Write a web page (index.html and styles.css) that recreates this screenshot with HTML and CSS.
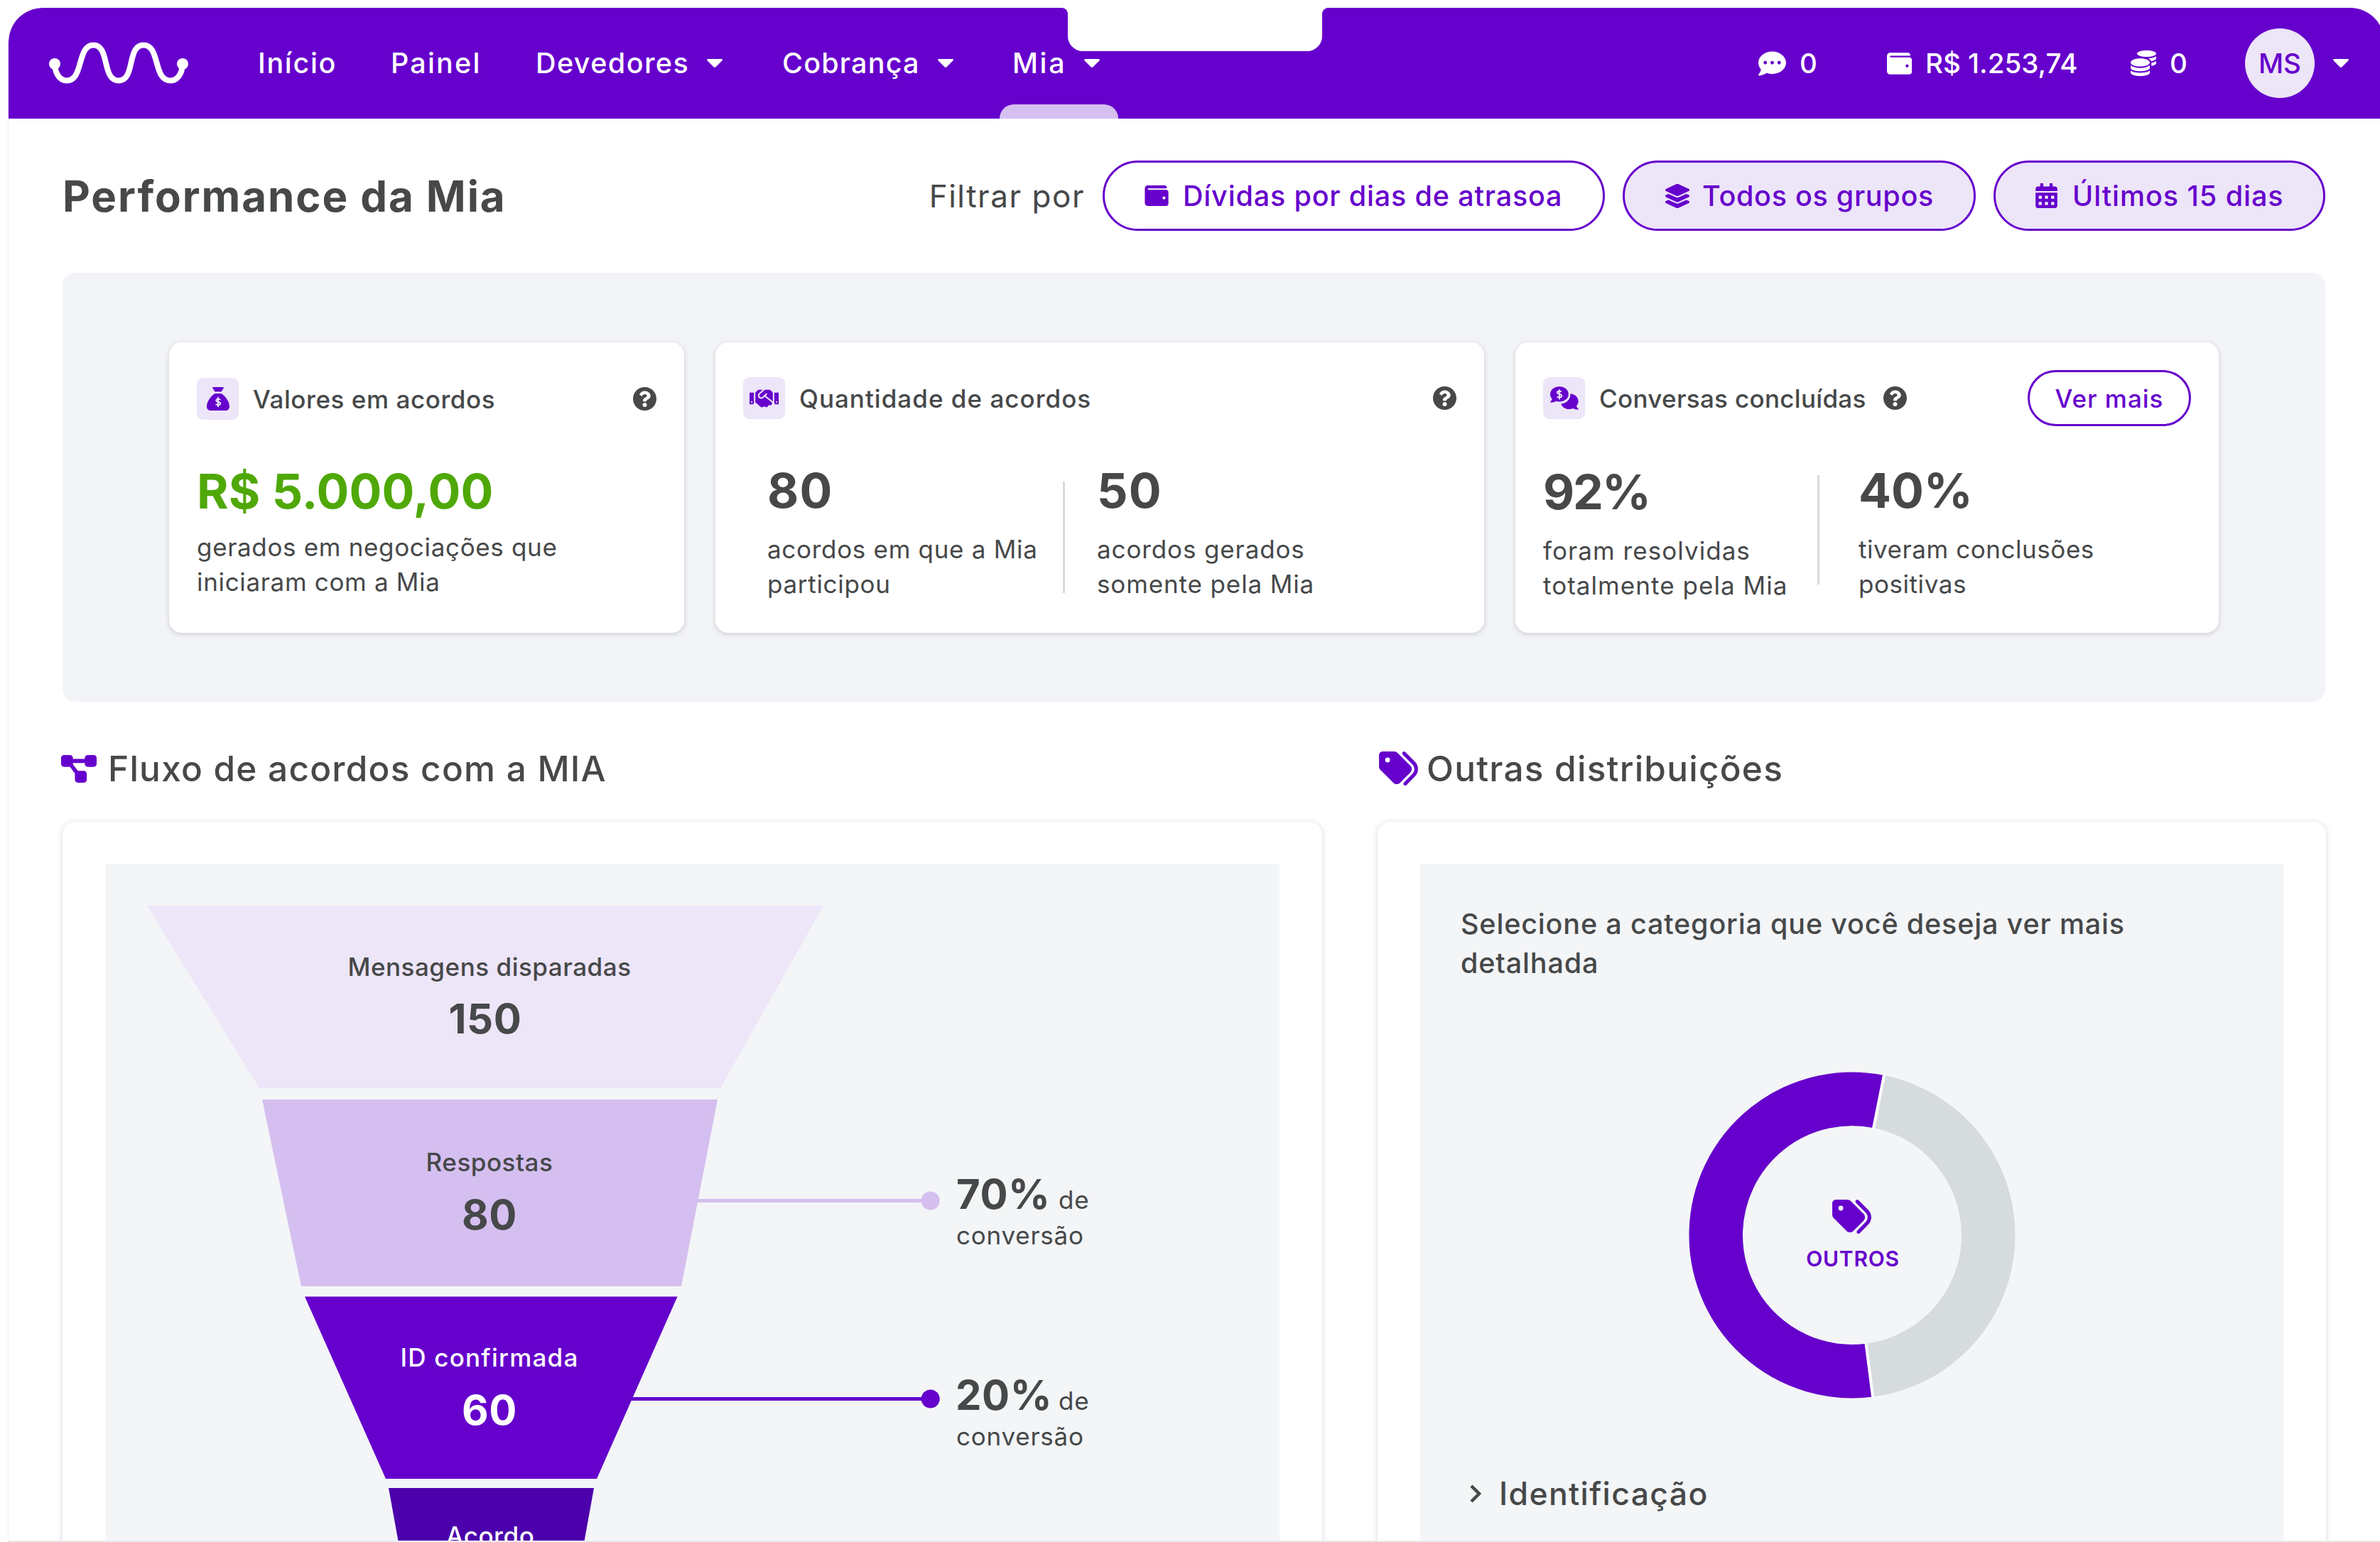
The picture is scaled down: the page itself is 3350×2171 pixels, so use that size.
FILE: index.html
```
<!DOCTYPE html>
<html lang="pt-BR">
<head>
  <meta charset="UTF-8">
  <title>Performance da Mia</title>
  <link rel="stylesheet" href="styles.css">
</head>
<body>
  <!-- shared icons -->
  <svg class="sprite">
    <symbol id="wallet" viewBox="0 32 512 448"><path d="M461.2 128H80c-8.84 0-16-7.16-16-16s7.16-16 16-16h384c8.84 0 16-7.16 16-16 0-26.51-21.49-48-48-48H64C28.65 32 0 60.65 0 96v320c0 35.35 28.65 64 64 64h397.2c28.02 0 50.8-21.53 50.8-48V176c0-26.47-22.78-48-50.8-48zM416 336c-17.67 0-32-14.33-32-32s14.33-32 32-32 32 14.33 32 32-14.33 32-32 32z"/></symbol>
    <symbol id="tags" viewBox="0 32 512 448"><path d="M345 39.1L472.8 168.4c52.4 53 52.4 138.2 0 191.2L360.8 472.9c-9.3 9.4-24.5 9.5-33.9 .2s-9.5-24.5-.2-33.9L438.6 325.9c33.9-34.3 33.9-89.4 0-123.7L310.9 72.9c-9.3-9.4-9.2-24.6 .2-33.9s24.6-9.2 33.9 .2zM0 229.5V80C0 53.5 21.5 32 48 32H197.5c17 0 33.3 6.7 45.3 18.7l168 168c25 25 25 65.5 0 90.5L277.3 442.7c-25 25-65.5 25-90.5 0l-168-168C6.7 262.7 0 246.5 0 229.5zM144 144a32 32 0 1 0 -64 0 32 32 0 1 0 64 0z"/></symbol>
    <symbol id="question" viewBox="8 8 496 496"><path d="M504 256c0 136.997-111.043 248-248 248S8 392.997 8 256C8 119.083 119.043 8 256 8s248 111.083 248 248zM262.655 90c-54.497 0-89.255 22.957-116.549 63.758-3.536 5.286-2.353 12.415 2.715 16.258l34.699 26.31c5.205 3.947 12.621 3.008 16.665-2.122 17.864-22.658 30.113-35.797 57.303-35.797 20.429 0 45.698 13.148 45.698 32.958 0 14.976-12.363 22.667-32.534 33.976C247.128 238.528 216 254.941 216 296v4c0 6.627 5.373 12 12 12h56c6.627 0 12-5.373 12-12v-1.333c0-28.462 83.186-29.647 83.186-106.667 0-58.002-60.165-102-116.531-102zM256 338c-25.365 0-46 20.635-46 46 0 25.364 20.635 46 46 46s46-20.636 46-46c0-25.365-20.635-46-46-46z"/></symbol>
    <symbol id="caret" viewBox="0 0 22 12"><path d="M1.500 0h19c1.300 0 1.800 1.300 1 2.200l-9 9c-.9.900-2.100.900-3 0l-9-9C-.3 1.300.2 0 1.500 0z"/></symbol>
  </svg>

  <div class="app">
    <header class="topbar">
      <div class="notch"></div>
      <svg class="logo" viewBox="0 0 196 60">
        <path d="M8 32C9 46 16 54.500 25 54.500C49 54.500 39 4.500 62.500 4.500C86 4.500 74 54.500 98 54.500C122 54.500 109 4.500 133 4.500C157 4.500 146 54.500 171 54.500C180 54.500 187 46 188 32"/>
        <circle cx="8" cy="31" r="8"/>
        <circle cx="188" cy="31" r="8"/>
      </svg>
      <nav class="menu">
        <a class="item inicio">Início</a>
        <a class="item painel">Painel</a>
        <a class="item devedores">Devedores <svg class="caret"><use href="#caret"/></svg></a>
        <a class="item cobranca">Cobrança <svg class="caret"><use href="#caret"/></svg></a>
        <a class="item mia">Mia <svg class="caret"><use href="#caret"/></svg></a>
      </nav>
      <div class="account">
        <div class="info chats">
          <svg width="39" height="35" viewBox="0 32 512 448"><path d="M256 448c141.400 0 256-93.100 256-208S397.400 32 256 32S0 125.100 0 240c0 45.100 17.700 86.800 47.700 120.900c-1.900 24.500-11.400 46.300-21.400 62.900c-5.500 9.200-11.100 16.600-15.200 21.600c-2.100 2.500-3.700 4.400-4.900 5.700c-.6 .6-1 1.100-1.300 1.400l-.3 .3c-4.600 4.600-5.900 11.400-3.400 17.400c2.500 6 8.300 9.900 14.800 9.900c28.700 0 57.600-8.900 81.600-19.300c22.900-10 42.400-21.900 54.300-30.600c31.800 11.500 67 17.900 104.100 17.900zM128 208a32 32 0 1 1 0 64 32 32 0 1 1 0-64zm128 0a32 32 0 1 1 0 64 32 32 0 1 1 0-64zm96 32a32 32 0 1 1 64 0 32 32 0 1 1 -64 0z"/></svg>
          <span>0</span>
        </div>
        <div class="info balance">
          <svg width="35" height="31"><use href="#wallet"/></svg>
          <span>R$ 1.253,74</span>
        </div>
        <div class="info coins">
          <svg width="36" height="36" viewBox="0 0 512 512"><path d="M0 405.300V448c0 35.300 86 64 192 64s192-28.700 192-64v-42.700C342.700 434.400 267.200 448 192 448S41.300 434.400 0 405.300zM320 128c106 0 192-28.700 192-64S426 0 320 0 128 28.700 128 64s86 64 192 64zM0 300.400V352c0 35.300 86 64 192 64s192-28.700 192-64v-51.600c-41.300 34-116.900 51.600-192 51.600S41.300 334.400 0 300.400zm416 11c57.300-11.100 96-31.700 96-55.400v-42.700c-23.200 16.400-57.300 27.600-96 34.500v63.600zM192 160C86 160 0 195.800 0 240s86 80 192 80 192-35.800 192-80-86-80-192-80zm219.300 56.300c60-10.800 100.700-32 100.700-56.300v-42.700c-35.500 25.100-96.500 38.600-160.700 41.800 29.500 14.300 51.200 33.500 60 57.200z"/></svg>
          <span>0</span>
        </div>
        <div class="avatar">MS</div>
        <svg class="caret"><use href="#caret"/></svg>
      </div>
    </header>

    <main>
      <div class="titleRow">
        <h1>Performance da Mia</h1>
        <div class="filters">
          <span class="filterLabel">Filtrar por</span>
          <button class="pill debts"><svg width="34" height="29"><use href="#wallet"/></svg>Dívidas por dias de atrasoa</button>
          <button class="pill filled groups">
            <svg width="36" height="34" viewBox="24 0 528 512"><path d="M264.500 5.200c14.900-6.900 32.100-6.900 47 0l218.600 101c8.500 3.900 13.900 12.400 13.900 21.800s-5.400 17.900-13.900 21.800l-218.600 101c-14.900 6.900-32.100 6.900-47 0L45.900 149.800C37.400 145.800 32 137.300 32 128s5.400-17.900 13.900-21.800L264.500 5.200zM476.900 209.600l53.200 24.600c8.500 3.900 13.900 12.400 13.900 21.800s-5.400 17.900-13.900 21.800l-218.600 101c-14.900 6.900-32.100 6.900-47 0L45.900 277.800C37.400 273.800 32 265.300 32 256s5.400-17.900 13.900-21.800l53.200-24.600 152 70.200c23.400 10.800 50.400 10.800 73.800 0l152-70.200zm-152 198.200l152-70.200 53.200 24.600c8.500 3.900 13.900 12.400 13.900 21.800s-5.400 17.900-13.900 21.800l-218.600 101c-14.900 6.900-32.100 6.900-47 0L45.900 405.800C37.400 401.800 32 393.300 32 384s5.400-17.900 13.900-21.800l53.200-24.600 152 70.200c23.400 10.800 50.400 10.800 73.800 0z"/></svg>Todos os grupos
          </button>
          <button class="pill filled period">
            <svg width="31" height="35" viewBox="0 0 448 512"><path d="M0 464c0 26.500 21.500 48 48 48h352c26.500 0 48-21.500 48-48V192H0v272zm320-196c0-6.600 5.400-12 12-12h40c6.600 0 12 5.400 12 12v40c0 6.600-5.400 12-12 12h-40c-6.600 0-12-5.400-12-12v-40zm0 128c0-6.600 5.400-12 12-12h40c6.600 0 12 5.400 12 12v40c0 6.600-5.400 12-12 12h-40c-6.600 0-12-5.400-12-12v-40zM192 268c0-6.600 5.400-12 12-12h40c6.600 0 12 5.400 12 12v40c0 6.600-5.400 12-12 12h-40c-6.600 0-12-5.400-12-12v-40zm0 128c0-6.600 5.400-12 12-12h40c6.600 0 12 5.400 12 12v40c0 6.600-5.400 12-12 12h-40c-6.600 0-12-5.400-12-12v-40zM64 268c0-6.600 5.400-12 12-12h40c6.600 0 12 5.400 12 12v40c0 6.600-5.400 12-12 12H76c-6.600 0-12-5.400-12-12v-40zm0 128c0-6.600 5.400-12 12-12h40c6.600 0 12 5.400 12 12v40c0 6.600-5.400 12-12 12H76c-6.600 0-12-5.400-12-12v-40zM400 64h-48V16c0-8.800-7.200-16-16-16h-32c-8.800 0-16 7.200-16 16v48H160V16c0-8.800-7.200-16-16-16h-32c-8.800 0-16 7.200-16 16v48H48C21.500 64 0 85.500 0 112v48h448v-48c0-26.500-21.500-48-48-48z"/></svg>Últimos 15 dias
          </button>
        </div>
      </div>

      <section class="summary">
        <article class="card values">
          <div class="cardHead">
            <span class="tile">
              <svg width="32" height="33" viewBox="0 0 32 33">
                <path d="M9.200 0h13.600c.9 0 1.300.8.900 1.500L20.500 6.500h-9L8.300 1.500C7.900.8 8.300 0 9.200 0zM11.500 9h9C26 12.500 32 20 32 27.500C32 31 29.500 33 26 33H6c-3.500 0-6-2-6-5.500C0 20 6 12.500 11.500 9z"/>
                <path class="sign" d="M16 14v14M19.300 17.700c-1.500-.8-6-1.400-6 1.200c0 2.800 6 1.400 6 4.200c0 2.600-5 2.100-6.700 1"/>
              </svg>
            </span>
            <h3>Valores em acordos</h3>
            <svg class="help"><use href="#question"/></svg>
          </div>
          <div class="stats">
            <div class="stat">
              <strong class="money">R$ 5.000,00</strong>
              <p>gerados em negociações que<br>iniciaram com a Mia</p>
            </div>
          </div>
        </article>

        <article class="card amount">
          <div class="cardHead">
            <span class="tile">
              <svg width="41" height="26" viewBox="0 64 640 384"><path d="M434.700 64h-85.900c-8 0-15.700 3-21.600 8.400l-98.300 90c-.1.100-.2.300-.3.400-16.600 15.600-16.300 40.500-2.100 56 12.700 13.900 39.400 17.600 56.100 2.700.1-.1.300-.1.400-.2l79.900-73.200c6.500-5.900 16.700-5.500 22.600 1 6 6.500 5.500 16.600-1 22.600l-26.100 23.900L504 313.800c2.900 2.400 5.500 5 7.900 7.700V128l-54.600-54.600c-5.900-6-14.100-9.400-22.600-9.400zM544 128.200v223.900c0 17.700 14.300 32 32 32h64V128.200h-96zm48 223.900c-8.800 0-16-7.200-16-16s7.200-16 16-16 16 7.200 16 16-7.200 16-16 16zM0 384h64c17.700 0 32-14.300 32-32V128.200H0V384zm48-63.900c8.800 0 16 7.200 16 16s-7.200 16-16 16-16-7.200-16-16c0-8.900 7.200-16 16-16zm435.900 18.600L334.600 217.500l-30 27.500c-29.700 27.100-75.200 24.500-101.700-4.400-26.900-29.400-24.800-74.900 4.400-101.700L289.100 64h-83.800c-8.500 0-16.600 3.400-22.600 9.400L128 128v223.900h18.300l90.500 81.900c27.400 22.300 67.700 18.100 90-9.300l.2-.2 17.900 15.500c15.900 13 39.400 10.500 52.300-5.400l31.400-38.600 5.400 4.400c13.700 11.100 33.900 9.100 45-4.700l9.500-11.700c11.200-13.800 9.100-33.900-4.600-45.100z"/></svg>
            </span>
            <h3>Quantidade de acordos</h3>
            <svg class="help"><use href="#question"/></svg>
          </div>
          <div class="stats">
            <div class="stat">
              <strong>80</strong>
              <p>acordos em que a Mia<br>participou</p>
            </div>
            <div class="stat split">
              <strong>50</strong>
              <p>acordos gerados<br>somente pela Mia</p>
            </div>
          </div>
        </article>

        <article class="card talks">
          <div class="cardHead">
            <span class="tile">
              <svg width="40" height="33" viewBox="66 68 121 100">
                <path d="M152 99c20 2 34 16 34 33c0 8-3 14-8 19c1 6 4 9 8 12c1 2 0 4-2 4c-8 0-14-2-20-5c-25 8-47-2-52-20c24-2 41-19 40-43z"/>
                <path d="M105 69c22 0 39 14 39 32s-17 32-39 32c-5 0-10-1-14-2c-6 4-13 6-22 6c-2 0-3-3-2-4c4-4 6-7 7-12c-5-5-8-12-8-20c0-18 17-32 39-32z"/>
                <path class="sign" d="M105 81v42M114 91c-5-4-18-4-18 3c0 9 19 5 19 14c0 8-14 8-20 4"/>
              </svg>
            </span>
            <h3>Conversas concluídas</h3>
            <svg class="help"><use href="#question"/></svg>
            <button class="more">Ver mais</button>
          </div>
          <div class="stats">
            <div class="stat lower">
              <strong>92%</strong>
              <p>foram resolvidas<br>totalmente pela Mia</p>
            </div>
            <div class="stat split">
              <strong>40%</strong>
              <p>tiveram conclusões<br>positivas</p>
            </div>
          </div>
        </article>
      </section>

      <div class="columns">
        <section class="flow">
          <h2>
            <svg width="50" height="39" viewBox="0 32 576 448"><path d="M0 80C0 53.500 21.500 32 48 32h96c26.500 0 48 21.500 48 48V96H384V80c0-26.500 21.500-48 48-48h96c26.500 0 48 21.500 48 48v96c0 26.500-21.500 48-48 48H432c-26.500 0-48-21.500-48-48V160H192v16c0 1.700-.1 3.400-.3 5L272 288h96c26.500 0 48 21.500 48 48v96c0 26.500-21.500 48-48 48H272c-26.500 0-48-21.500-48-48V336c0-1.700 .1-3.400 .3-5L144 224H48c-26.500 0-48-21.500-48-48V80z"/></svg>
            Fluxo de acordos com a MIA
          </h2>
          <div class="box">
            <div class="inner">
              <svg class="funnel" width="1653" height="1100" viewBox="0 0 1653 1100">
                <polygon fill="#ede5f8" points="59,59 1011,59 866,316 217,316"/>
                <polygon fill="#d5bff0" points="221,332 862,332 811,595 276,595"/>
                <polygon fill="#6600cc" points="281,609.500 805.500,609.500 692,866 395,866"/>
                <polygon fill="#4b00ab" points="399,879 688,879 648,1100 439,1100"/>

                <text class="label" x="541" y="157.500">Mensagens disparadas</text>
                <text class="number" x="535" y="239">150</text>
                <text class="label" x="541" y="432.500">Respostas</text>
                <text class="number" x="541" y="514.500">80</text>
                <text class="label white idLabel" x="541" y="708">ID confirmada</text>
                <text class="number white" x="541" y="790">60</text>
                <text class="label white" x="542" y="959">Acordo</text>

                <path d="M834 474.500H1162" stroke="#d5bff0" stroke-width="5"/>
                <circle cx="1161.700" cy="474.500" r="13" fill="#d5bff0"/>
                <text class="rate" x="1198" y="485.500">70%</text>
                <text class="rateLabel" x="1342" y="485.500">de</text>
                <text class="rateLabel" x="1198" y="535.500">conversão</text>

                <path d="M741 753.500H1162" stroke="#6600cc" stroke-width="5"/>
                <circle cx="1161.700" cy="753.500" r="13" fill="#6600cc"/>
                <text class="rate" x="1197" y="768.500">20%</text>
                <text class="rateLabel" x="1342" y="768.500">de</text>
                <text class="rateLabel" x="1198" y="818.500">conversão</text>
              </svg>
            </div>
          </div>
        </section>

        <section class="others">
          <h2><svg width="55" height="48"><use href="#tags"/></svg>Outras distribuições</h2>
          <div class="box">
            <div class="inner">
              <p class="hint">Selecione a categoria que você deseja ver mais<br>detalhada</p>
              <div class="donut">
                <svg width="460" height="460" viewBox="0 0 460 460">
                  <circle cx="230" cy="230" r="191.700" fill="none" stroke="#d6dbde" stroke-width="75.500"/>
                  <path d="M267.600 42A191.700 191.700 0 1 0 254.400 420.100" fill="none" stroke="#6600cc" stroke-width="75.500"/>
                  <path d="M260 80L275 4.500M249.400 381.800L259.200 458.200" stroke="#fff" stroke-width="4"/>
                </svg>
                <div class="donutLabel">
                  <svg width="55" height="48"><use href="#tags"/></svg>
                  <span>OUTROS</span>
                </div>
              </div>
              <div class="category">
                <svg width="18" height="30" viewBox="0 0 18 30"><path d="M3 4l11 11L3 26"/></svg>
                <span>Identificação</span>
              </div>
            </div>
          </div>
        </section>
      </div>
    </main>
  </div>
</body>
</html>
```
FILE: styles.css
```
* { box-sizing: border-box; }

body {
  margin: 0;
  padding: 11px 0 0 12px;
  height: 2171px;
  background: #fff;
  color: #464849;
  font-family: Inter, sans-serif;
  overflow: hidden;
}

h1, h2, h3, p { margin: 0; }

svg { flex: none; fill: currentColor; }

button {
  font-family: inherit;
  color: #6600cc;
  background: #fff;
  border: 3px solid #6600cc;
  padding: 0;
  cursor: pointer;
}

.sprite { display: none; }

.app {
  height: 2160px;
  overflow: hidden;
  border-bottom: 2px solid #ececef;
  box-shadow: -1px 0 0 #f1f1f3;
  border-radius: 48px 0 0 0;
}

/* top bar */
.topbar {
  position: relative;
  display: flex;
  align-items: center;
  height: 156px;
  margin-right: -6px;
  padding: 0 50px 0 57px;
  background: #6600cc;
  color: #fff;
  border-radius: 48px 48px 0 0;
  font-size: 39.5px;
  font-weight: 500;
}

.notch {
  position: absolute;
  top: 0;
  left: 1491px;
  width: 358px;
  height: 61px;
  background: #fff;
  border-radius: 0 0 21px 21px;
}

/* small outward corners of the notch */
.notch::before, .notch::after {
  content: "";
  position: absolute;
  top: 0;
  width: 8px;
  height: 8px;
}
.notch::before { left: -8px; background: radial-gradient(circle at 0 100%, transparent 7.5px, #fff 8px); }
.notch::after { right: -8px; background: radial-gradient(circle at 100% 100%, transparent 7.5px, #fff 8px); }

.logo { width: 196px; height: 60px; }
.logo path { fill: none; stroke: #fff; stroke-width: 8; }

.menu {
  display: flex;
  height: 100%;
  margin-left: 98px;
}

.item {
  position: relative;
  display: flex;
  align-items: center;
  letter-spacing: 0.036em;
}

.caret { width: 22px; height: 12px; }
.item .caret { margin-left: 25px; }

.inicio { width: 187px; letter-spacing: 0.042em; }
.painel { width: 204px; letter-spacing: 0.055em; }
.devedores { width: 347px; }
.cobranca { width: 324px; letter-spacing: 0.03em; }
.mia { width: 149px; letter-spacing: 0.065em; }

/* active tab */
.mia::after {
  content: "";
  position: absolute;
  left: -18px;
  bottom: 0;
  width: 167px;
  height: 20px;
  background: #d5bff0;
  border-radius: 20px 20px 0 0;
}

.account {
  display: flex;
  align-items: center;
  margin-left: auto;
  font-size: 38.5px;
}

.info { display: flex; align-items: center; gap: 19px; }
.chats { width: 181px; }
.balance { width: 343px; }
.coins { width: 161px; }

.avatar {
  display: flex;
  align-items: center;
  justify-content: center;
  width: 98px;
  height: 98px;
  margin-right: 26px;
  border-radius: 50%;
  background: #ede5f8;
  color: #6600cc;
}

/* title and filters */
main { padding: 59px 77px 0 76px; }

.titleRow {
  display: flex;
  justify-content: space-between;
  align-items: center;
  height: 99px;
}

h1 {
  font-size: 60px;
  font-weight: 700;
  letter-spacing: 0.032em;
}

.filters { display: flex; align-items: center; gap: 25px; }

.filterLabel { font-size: 44px; letter-spacing: 0.035em; }

.pill {
  display: flex;
  align-items: center;
  gap: 20px;
  height: 99px;
  padding-left: 56px;
  border-radius: 50px;
  font-size: 39.5px;
  font-weight: 500;
  letter-spacing: 0.021em;
  white-space: nowrap;
}

.filled { background: #ede5f8; }
.debts { width: 707px; }
.groups { width: 497px; gap: 17px; letter-spacing: 0.018em; }
.period { width: 467px; gap: 21px; letter-spacing: 0.024em; }

/* summary cards */
.summary {
  display: flex;
  gap: 44px;
  height: 604px;
  margin-top: 59px;
  padding: 98px 150px 97px 150px;
  background: #f3f4f7;
  border-radius: 18px;
}

.card {
  padding: 39px;
  background: #fff;
  border-radius: 18px;
  box-shadow: 0 2px 7px rgba(30, 35, 50, 0.18);
}

.values { width: 725px; padding-top: 40px; }
.amount { width: 1082px; }
.talks { width: 990px; }

.cardHead { display: flex; align-items: center; height: 79px; }

.tile {
  display: flex;
  align-items: center;
  justify-content: center;
  width: 59px;
  height: 59px;
  margin-right: 20px;
  background: #ede5f8;
  border-radius: 9px;
  color: #6600cc;
}
.tile .sign { fill: none; stroke: #ede5f8; stroke-width: 2; }
.talks .tile .sign { stroke-width: 6; }

h3 {
  font-size: 35px;
  font-weight: 500;
  letter-spacing: 0.016em;
}
.amount h3 { letter-spacing: 0.029em; }
.talks h3 { letter-spacing: 0.009em; }

.help { width: 33px; height: 33px; margin-left: auto; }
.talks .help { margin-left: 24px; }

.more {
  width: 230px;
  height: 79px;
  margin-left: auto;
  border-radius: 40px;
  font-size: 35px;
  font-weight: 500;
  letter-spacing: 0.028em;
}

.stats { display: flex; margin-top: 50px; }

.stat strong {
  display: block;
  font-size: 68px;
  line-height: 80px;
  font-weight: 700;
  letter-spacing: 0.02em;
}

.stat p {
  margin-top: 19px;
  font-size: 35px;
  line-height: 48.5px;
  letter-spacing: 0.025em;
  white-space: nowrap;
}

.values .stat p { margin-top: 15px; letter-spacing: 0.019em; }
.values .stat strong { letter-spacing: 0.002em; }
.money { color: #4fa808; }
.amount .stats { padding-left: 34px; }
.amount .stat:first-child { width: 416px; }
.amount .stat:first-child p { letter-spacing: 0.02em; }
.talks .stat:first-child { width: 386px; }
.talks .stat strong { letter-spacing: 0; }
.talks .lower strong { letter-spacing: -0.03em; }
.talks .lower p { letter-spacing: 0.03em; }
.talks .split p { letter-spacing: 0.016em; }
.lower { padding-top: 2px; }

.split {
  padding-left: 48px;
  background: linear-gradient(#d5d9dc, #d5d9dc) 0 28px / 3px 157px no-repeat;
}
.talks .split {
  padding-left: 58px;
  background-position: 0 19px;
  background-size: 3px 154px;
}

/* lower columns */
.columns { display: flex; gap: 78px; margin-top: 44px; }
.flow { width: 1773px; }
.others { width: 1335px; flex: none; }

h2 {
  display: flex;
  align-items: center;
  gap: 16px;
  height: 100px;
  margin: 0 0 25px -2px;
  font-size: 49.5px;
  font-weight: 500;
  letter-spacing: 0.025em;
  white-space: nowrap;
}
h2 svg { color: #6600cc; }
.others h2 { margin-left: 2px; gap: 12px; }

.box {
  height: 1200px;
  padding: 59px 60px;
  border-radius: 18px;
  box-shadow: 0 1px 8px rgba(30, 35, 50, 0.18);
}

.inner { height: 1140px; background: #f3f5f7; }

.funnel { display: block; }
.funnel text { fill: #464849; }
.funnel .label, .rateLabel { font-size: 35px; font-weight: 500; letter-spacing: 0.015em; }
.funnel .idLabel { letter-spacing: 0.035em; }
.funnel .label, .number { text-anchor: middle; }
.number, .rate { font-size: 58px; font-weight: 700; letter-spacing: 0.01em; }
.funnel .white { fill: #fff; }
.funnel .rateLabel { font-weight: 400; letter-spacing: 0.022em; }

.others .inner { padding: 58px 57px; }

.hint {
  font-size: 39.5px;
  font-weight: 500;
  line-height: 54.5px;
  letter-spacing: 0.021em;
  white-space: nowrap;
}

.donut {
  position: relative;
  width: 460px;
  height: 460px;
  margin: 126px auto 0;
}

.donutLabel {
  position: absolute;
  inset: 0;
  display: flex;
  flex-direction: column;
  align-items: center;
  padding-top: 180px;
  color: #6600cc;
}

.donutLabel span {
  margin: 20px 0 0 3px;
  font-size: 30px;
  line-height: 30px;
  font-weight: 600;
  letter-spacing: 0.025em;
}

.category {
  display: flex;
  align-items: center;
  gap: 24px;
  height: 60px;
  margin: 104px 0 0 12px;
  font-size: 44.5px;
  font-weight: 500;
  letter-spacing: 0.031em;
}
.category path { fill: none; stroke: #464849; stroke-width: 4.5; }
```
